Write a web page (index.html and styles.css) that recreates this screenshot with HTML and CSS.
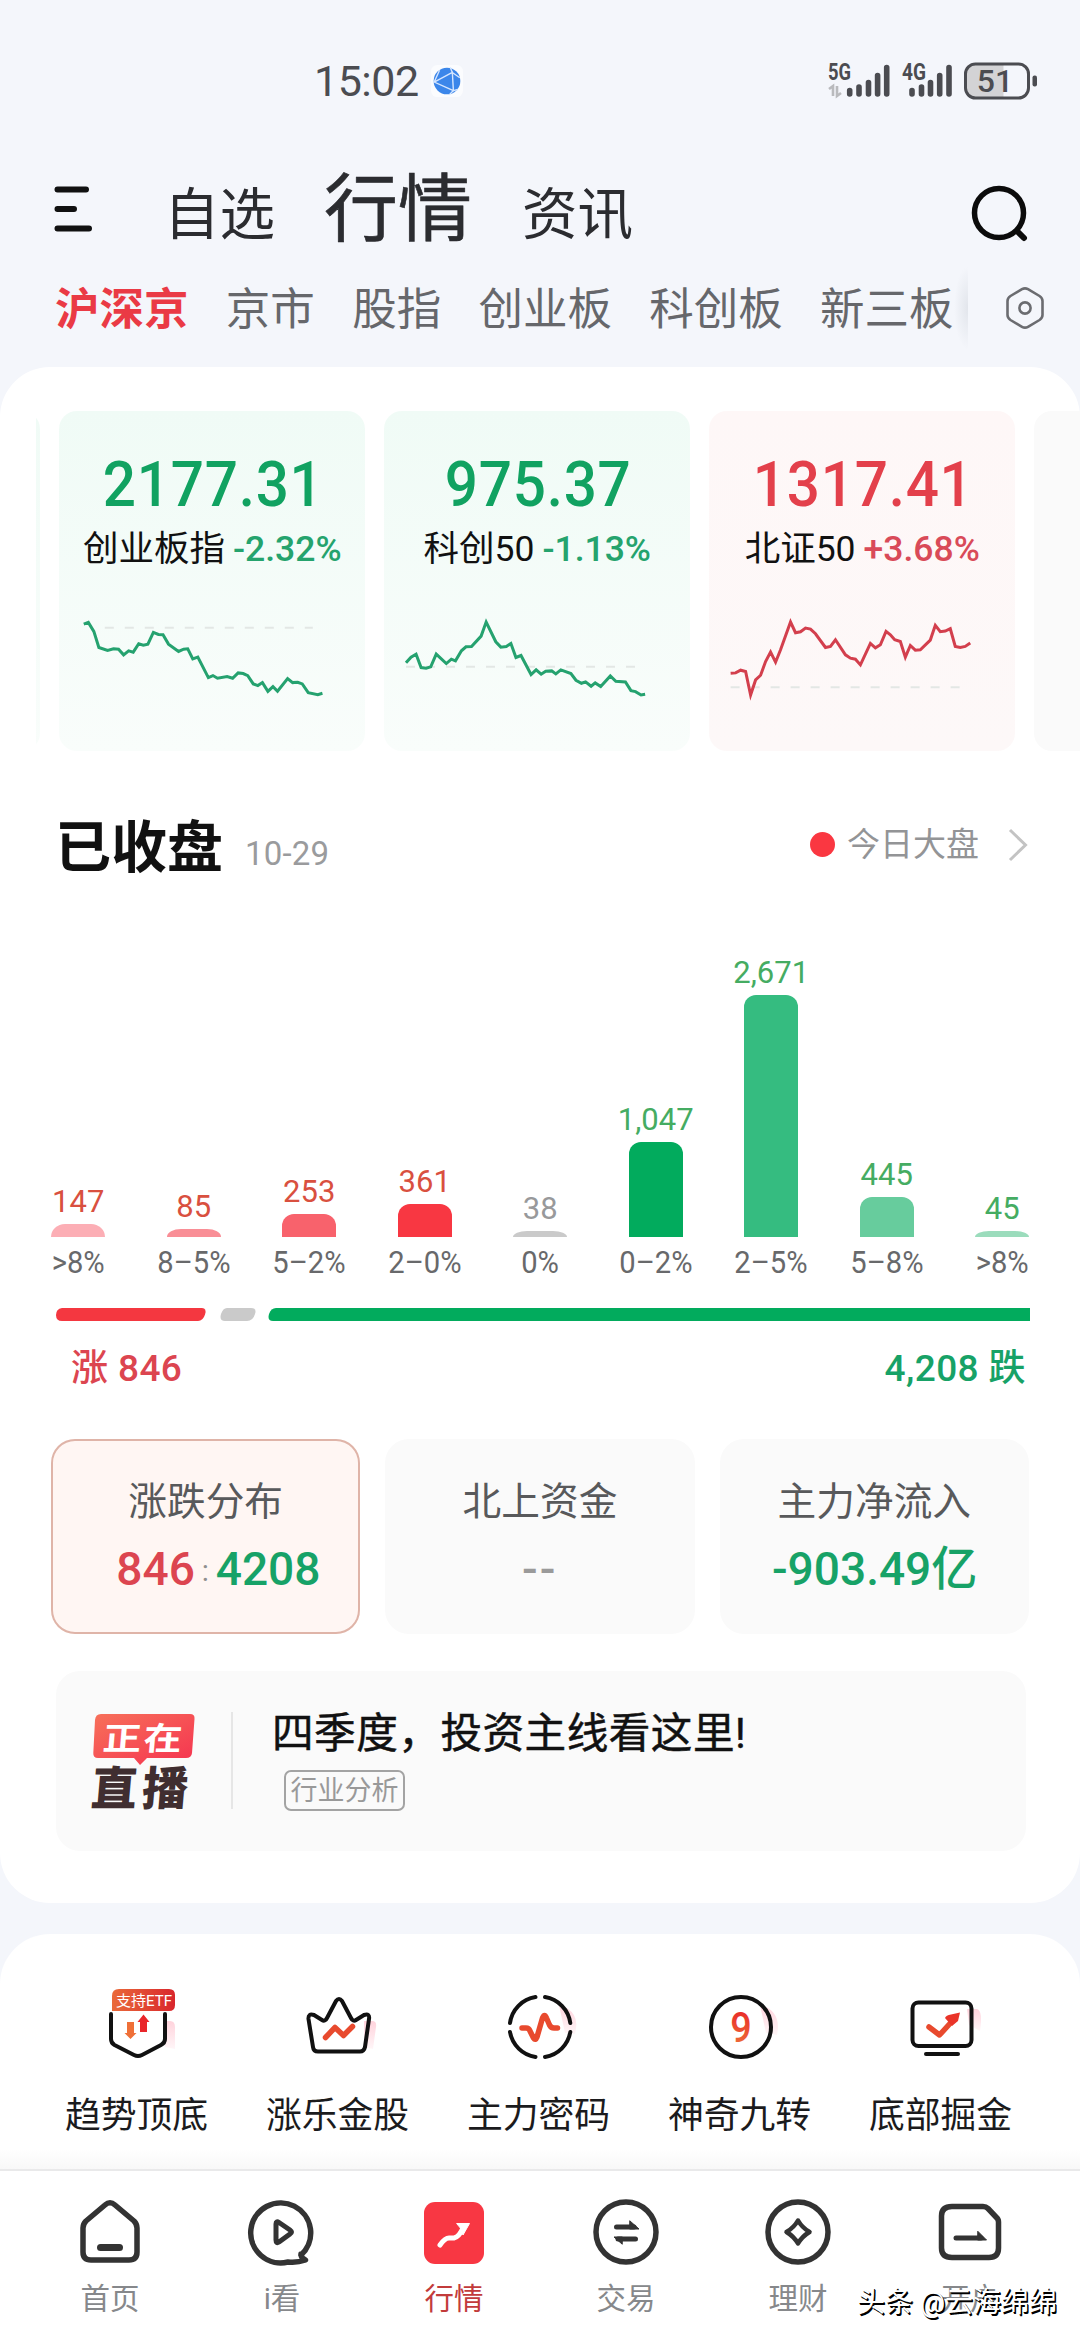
FILE: index.html
```html
<!DOCTYPE html>
<html lang="zh-CN">
<head>
<meta charset="utf-8">
<title>行情</title>
<link rel="stylesheet" href="styles.css">
</head>
<body>
<div class="app">
  <header class="status">
    <div class="clock">15:02</div>
    <svg class="globe" viewBox="-15 -15 30 30"><rect x="-15" y="-15" width="30" height="30" rx="6" fill="#fbfcfe"/><circle r="12.5" fill="#3b86ea"/><path d="M-12 1 L5 -8 L6 9 Z M5 -8 L3 -13 M5 -8 L12 -3 M6 9 L10 8 M6 9 L2 13 M-12 1 L-7 -10" fill="none" stroke="#d5e6ff" stroke-width="1.3"/></svg>
    <div class="signals">
      <svg class="signal" viewBox="0 0 64 36"><text x="0" y="17" class="gen" textLength="23" lengthAdjust="spacingAndGlyphs">5G</text><g stroke="#4b4c51" stroke-width="5.6" stroke-linecap="round"><path d="M21.7 27.5V31M31 24V31M40.5 19.5V31M49.600 12.500V31M58.700 4.500V31"/></g><path d="M1 26l4-3v10M9 23v10l4-3" fill="none" stroke="#b9babd" stroke-width="2.6"/></svg>
      <svg class="signal second" viewBox="0 0 54 36"><text x="0" y="17" class="gen" textLength="24" lengthAdjust="spacingAndGlyphs">4G</text><g stroke="#4b4c51" stroke-width="5.600" stroke-linecap="round"><path d="M10 27.500V31M19.500 24V31M28.500 19.500V31M37.700 12.500V31M47 4.500V31"/></g></svg>
      <svg class="battery" viewBox="0 0 74 38"><rect x="2" y="2" width="37.500" height="34" rx="9" fill="#d3d3d5"/><rect x="30" y="2" width="9.500" height="34" fill="#d3d3d5"/><rect x="1.500" y="2" width="63" height="34" rx="10" fill="none" stroke="#4b4c51" stroke-width="3"/><rect x="68.500" y="13.500" width="4.500" height="11" rx="2" fill="#4b4c51"/><text x="31" y="30" class="level">51</text></svg>
    </div>
  </header>

  <nav class="top">
    <svg class="menu" viewBox="0 0 40 46"><path d="M3.500 3.500H32M3.500 23H20M3.500 42.500H35" stroke="#111" stroke-width="6" stroke-linecap="round"/></svg>
    <span class="top-item">自选</span>
    <span class="top-item current">行情</span>
    <span class="top-item">资讯</span>
    <svg class="search" viewBox="0 0 60 60"><circle cx="29" cy="29" r="24.500" fill="none" stroke="#0b0b0b" stroke-width="5.500"/><path d="M47 47L54 54" stroke="#0b0b0b" stroke-width="6" stroke-linecap="round"/></svg>
  </nav>

  <nav class="tabs">
    <span class="tab active">沪深京</span><span class="tab">京市</span><span class="tab">股指</span><span class="tab">创业板</span><span class="tab">科创板</span><span class="tab">新三板</span>
    <i class="fade"></i>
    <svg class="hex" viewBox="0 0 40 44"><path d="M17 3.200Q20 1.500 23 3.200L34.500 10Q37.500 12 37.500 15V29Q37.500 32 34.500 34L23 40.800Q20 42.500 17 40.800L5.500 34Q2.500 32 2.500 29V15Q2.500 12 5.500 10Z" fill="none" stroke="#6b6c70" stroke-width="2.600"/><circle cx="20" cy="22" r="5.600" fill="none" stroke="#6b6c70" stroke-width="2.600"/></svg>
  </nav>

  <main class="panel market">
    <div class="cards">
      <div class="card down edge"></div>
      <div class="card down">
        <div class="price">2177.31</div>
        <div class="name">创业板指<b>-2.32%</b></div>
        <svg class="spark" viewBox="126 700 669 260" preserveAspectRatio="none"><path class="base" d="M226 744H680"/><polyline points="180,733 190,728 202,755 213,803 232,812 245,807 256,808 267,825 278,813 288,817 300,792 310,796 320,793 332,758 343,764 353,765 365,793 387,815 398,808 407,807 418,837 429,832 452,893 462,887 472,895 493,890 505,895 517,879 528,881 538,887 550,912 560,917 570,908 582,934 593,920 603,934 625,896 636,908 647,907 657,912 670,938 691,944 701,940"/></svg>
      </div>
      <div class="card down">
        <div class="price">975.37</div>
        <div class="name">科创50<b>-1.13%</b></div>
        <svg class="spark" viewBox="836 700 669 260" preserveAspectRatio="none"><path class="base" d="M884 861H1384"/><polyline points="884,849 895,832 906,823 917,863 928,865 938,861 950,823 972,851 983,838 992,843 1005,813 1015,801 1027,800 1048,769 1059,727 1080,786 1091,802 1103,800 1113,791 1124,833 1135,827 1157,884 1168,870 1179,883 1189,874 1202,873 1211,882 1222,870 1244,881 1255,901 1267,910 1276,906 1288,919 1297,909 1309,920 1330,888 1342,904 1363,906 1375,932 1385,935 1397,945 1406,943"/></svg>
      </div>
      <div class="card up">
        <div class="price">1317.41</div>
        <div class="name">北证50<b>+3.68%</b></div>
        <svg class="spark" viewBox="145 700 921 260" preserveAspectRatio="none"><path class="base" d="M210 922H900"/><polyline points="210,880 225,879 240,871 255,875 270,945 285,900 300,886 315,845 330,817 345,847 360,810 390,727 405,759 420,756 435,745 450,748 465,762 495,803 510,800 525,780 555,825 570,835 585,838 600,855 630,791 645,804 660,795 677,755 690,765 703,780 720,785 735,832 750,797 765,811 780,810 810,781 825,737 840,756 855,754 870,747 885,800 900,803 915,800 930,790"/></svg>
      </div>
      <div class="card more"></div>
    </div>

    <div class="heading">
      <h1>已收盘</h1><span class="date">10-29</span>
      <span class="today"><i class="dot"></i>今日大盘<svg class="chev" viewBox="0 0 20 34"><path d="M2 2L17.500 17L2 32" fill="none" stroke="#c3c3c3" stroke-width="3"/></svg></span>
    </div>

    <div class="chart">
      <div class="col r"><span>147</span><i class="bar b1 low" style="height:13px"></i><em>&gt;8%</em></div>
      <div class="col r"><span>85</span><i class="bar b2 low" style="height:8px"></i><em>8–5%</em></div>
      <div class="col r"><span>253</span><i class="bar b3" style="height:23px"></i><em>5–2%</em></div>
      <div class="col r"><span>361</span><i class="bar b4" style="height:33px"></i><em>2–0%</em></div>
      <div class="col n"><span>38</span><i class="bar b5 low" style="height:6px"></i><em>0%</em></div>
      <div class="col g"><span>1,047</span><i class="bar b6" style="height:95px"></i><em>0–2%</em></div>
      <div class="col g"><span>2,671</span><i class="bar b7" style="height:242px"></i><em>2–5%</em></div>
      <div class="col g"><span>445</span><i class="bar b8" style="height:40px"></i><em>5–8%</em></div>
      <div class="col g"><span>45</span><i class="bar b9 low" style="height:6px"></i><em>&gt;8%</em></div>
    </div>

    <svg class="ratio" viewBox="0 0 976 15"><path d="M8 1H148Q153 1 151 7.500Q149 14 144 14H8Q2 14 2 8Q2 2 8 1Z" fill="#f43740"/><path d="M173 1H197Q203 1 201 7Q199 14 193 14H171Q165 14 167 7Q169 1 173 1Z" fill="#cacaca"/><path d="M222 1H976V14H219Q213 14 215 7Q217 1 222 1Z" fill="#02ab5d"/></svg>
    <div class="totals"><span class="rise">涨 846</span><span class="fall">4,208 跌</span></div>

    <div class="tiles">
      <div class="tile on"><div class="label">涨跌分布</div><div class="value pair"><span class="rise">846</span><i>:</i><span class="fall">4208</span></div></div>
      <div class="tile"><div class="label">北上资金</div><div class="value none">--</div></div>
      <div class="tile"><div class="label">主力净流入</div><div class="value fall">-903.49亿</div></div>
    </div>

    <div class="live">
      <svg class="onair" viewBox="0 0 106 100"><defs><linearGradient id="lg" x1="0" y1="0" x2="1" y2="1"><stop offset="0" stop-color="#f7705a"/><stop offset="1" stop-color="#f53350"/></linearGradient></defs><path d="M9 2H98Q103 2 102.500 7L100 41Q99.500 46 94 46H55L48 53L42 46H6Q1 46 1.300 41L3 8Q3.500 2 9 2Z" fill="url(#lg)"/><text transform="translate(10 37.500) skewX(-5) scale(1.200 1)" class="now" textLength="66">正在</text><text transform="translate(-2 93) skewX(-5)" class="cast" textLength="97">直播</text></svg>
      <i class="rule"></i>
      <div class="live-text"><div class="live-title">四季度，投资主线看这里!</div><span class="tag">行业分析</span></div>
    </div>
  </main>

  <section class="panel quick">
    <svg width="0" height="0" class="defs"><defs><linearGradient id="hot" x1="0" y1="0" x2="0" y2="1"><stop offset="0" stop-color="#e81b25"/><stop offset="1" stop-color="#ee7a3c"/></linearGradient><linearGradient id="tagfill" x1="0" y1="0" x2="1" y2="0"><stop offset="0" stop-color="#ea6a3a"/><stop offset="1" stop-color="#d9262c"/></linearGradient><linearGradient id="pink" x1="0" y1="0" x2="0" y2="1"><stop offset="0" stop-color="#ffd3dc"/><stop offset="1" stop-color="#fff6f8"/></linearGradient></defs></svg>
    <a class="q"><svg viewBox="-45 -40 90 80"><path d="M26 -6H33Q38 -6 38 0V22L28 20Z" fill="url(#pink)"/><path d="M-26 -13V12Q-26 16 -22.500 18L-3 28Q1 30 5 28L24 18Q28 16 28 12V-13" class="ink"/><path d="M-10 -5H-3V6H-.500L-6.500 12L-12.500 6H-10Z" fill="#ef7038"/><path d="M3 5H10V-5H12.500L6.500 -12.500L.500 -5H3Z" fill="#e9252a"/><path d="M-18 -38H32Q38 -38 38 -32V-22Q38 -16 32 -16H-25V-31Q-25 -38 -18 -38Z" fill="url(#tagfill)"/><text x="-21" y="-21.500" class="etf" textLength="56" lengthAdjust="spacingAndGlyphs">支持ETF</text></svg>趋势顶底</a>
    <a class="q"><svg viewBox="-45 -40 90 80"><path d="M26 -6H34Q39 -6 38 0L35 22L26 20Z" fill="url(#pink)"/><path d="M-2 -26Q1 -30 4 -26L13 -9Q15 -5 18 -7L26 -12Q32 -14 31 -8L27 20Q26 24.500 22 24.500H-20Q-24.500 24.500 -25 20L-29.500 -8Q-30 -14 -24 -12L-16 -7Q-13 -5 -11 -9Z" class="ink"/><path d="M-12.500 10.500L-3 .500L5.500 8.500L14.500 -.500" class="hot"/></svg>涨乐金股</a>
    <a class="q"><svg viewBox="-45 -40 90 80"><path d="M20 -22Q42 -16 36 7L26 6Z" fill="url(#pink)"/><path d="M-3.500 -30A30.500 30.500 0 0 0 -29 -4M6 -30A30.500 30.500 0 0 1 31.300 -4M31.300 5A30.500 30.500 0 0 1 6 30M-3.500 30A30.500 30.500 0 0 1 -29 5" class="ink"/><path d="M-17 1H-13Q-10 1 -9 4L-5.500 11Q-3.500 14 -2 10L3.500 -9Q5.500 -14 7.500 -9L10.500 -2Q12 1 15 1H18.500" class="hot"/></svg>主力密码</a>
    <a class="q"><svg viewBox="-45 -40 90 80"><path d="M20 -22Q42 -16 37 8L26 6Z" fill="url(#pink)"/><circle cx="1" r="30" class="ink"/><text transform="translate(1 15) scale(.88 1)" class="nine">9</text></svg>神奇九转</a>
    <a class="q"><svg viewBox="-45 -40 90 80"><path d="M26 -18H36Q42 -16 39 4L28 -2Z" fill="url(#pink)"/><rect x="-28.500" y="-24.500" width="59" height="43.500" rx="6" class="ink"/><path d="M-15 27H17" class="ink"/><path d="M-12 0L-1.500 8L14 -9" class="hot"/><path d="M4 -9Q5 -12 10 -12.500L19 -14.500L17 -6L11 -1Z" fill="#ea3429"/></svg>底部掘金</a>
  </section>

  <footer class="bottom">
    <a><svg viewBox="-36 -36 72 72"><path d="M-5 -27Q0 -31.500 5 -27L24 -11Q27 -8 27 -4V20Q27 28 19 28H-19Q-27 28 -27 20V-4Q-27 -8 -24 -11Z"/><path d="M-9.500 15.500H9.500" stroke-width="7"/></svg>首页</a>
    <a><svg viewBox="-36 -36 72 72"><path d="M19 23A30 30 0 1 0 6 30Q15 31 23.500 28Q19 26 19 22" stroke-width="5.500"/><path d="M-6 -8Q-6 -11.500 -3 -9.500L8 -2Q11 0 8 2L-3 10Q-6 12 -6 8Z" stroke-width="5"/></svg>i看</a>
    <a class="active"><svg viewBox="-36 -36 72 72"><rect x="-30" y="-30" width="60" height="62" rx="11" class="fill"/><path d="M-14 13Q-9 6 -5 6H0Q5 5 9 -4" class="trend"/><path d="M3 -8.500H15.500L9 3L7 -3Z" class="white"/></svg>行情</a>
    <a><svg viewBox="-36 -36 72 72"><circle r="30"/><path d="M-9.500 -5H8M9.500 7H-8" stroke-width="5"/><path d="M4 -11L13 -3H4ZM-4 12L-12 5H-4Z" class="solid"/></svg>交易</a>
    <a><svg viewBox="-36 -36 72 72"><circle r="30"/><path d="M0 -11.500Q4 -4.500 11.500 0Q4 4.500 0 11.500Q-4 4.500 -11.500 0Q-4 -4.500 0 -11.500Z" stroke-width="4.500"/></svg>理财</a>
    <a><svg viewBox="-36 -36 72 72"><path d="M-18 -25.500H13Q16 -25.500 18 -23.500L26 -15Q28.500 -13 28.500 -10V16Q28.500 25.500 19 25.500H-18Q-28.500 25.500 -28.500 16V-16Q-28.500 -25.500 -18 -25.500Z" stroke-width="5.500"/><path d="M-14 6H11" stroke-width="5"/><path d="M8 -.500L16.500 8H8Z" class="solid"/></svg>开户</a>
    <div class="mark">头条 @云海绵绵</div>
  </footer>
</div>
</body>
</html>
```

FILE: styles.css
```css
* { box-sizing: border-box; }
body { margin: 0; background: #f4f6fb; font-family: Roboto, "Noto Sans CJK SC", sans-serif; color: #111; }
i, em { font-style: normal; }
svg { display: block; flex: none; overflow: visible; }
.app { width: 1080px; height: 2340px; overflow: hidden; display: flex; flex-direction: column; background: #f4f6fb; }

.status { height: 162px; display: flex; align-items: center; padding: 0 42px 0 314px; flex: none; color: #4b4c51; }
.clock { font-size: 43px; line-height: 60px; width: 117px; letter-spacing: -.5px; }
.globe { width: 32px; height: 32px; }
.signals { margin-left: auto; display: flex; align-items: center; }
.signal { width: 64px; height: 36px; }
.signal.second { width: 54px; margin-left: 10px; }
.battery { width: 74px; height: 38px; margin-left: 8px; }
.gen { font-size: 23px; font-weight: 700; fill: #4b4c51; }
.level { font-size: 32px; font-weight: 500; fill: #4b4c51; text-anchor: middle; }

.top { height: 104px; flex: none; display: flex; align-items: center; padding: 0 50px 0 54px; color: #2b2c30; }
.menu { width: 40px; height: 46px; margin-bottom: 11px; margin-right: 70px; }
.top-item { font-size: 55.500px; line-height: 80px; margin-right: 49px; margin-top: 3px; }
.top-item.current { font-size: 74px; margin-top: -9px; margin-right: 50px; -webkit-text-stroke: .6px #2b2c30; }
.search { width: 60px; height: 60px; margin-left: auto; }

.tabs { height: 84px; flex: none; display: flex; align-items: center; padding: 0 35px 0 55px; gap: 37.3px; font-size: 44.5px; color: #66676b; margin-bottom: 17px; }
.tab { line-height: 60px; margin-top: 4px; white-space: nowrap; }
.tab.active { color: #ea3a45; font-weight: 700; }
.fade { width: 24px; height: 84px; margin-left: -37px; background: radial-gradient(ellipse at 100% 50%, rgba(214,218,225,.6), rgba(220,223,229,0) 70%); }
.hex { width: 40px; height: 44px; margin-left: auto; }

.panel { background: #fff; border-radius: 50px; flex: none; }
.market { height: 1536px; padding-top: 44px; }
.cards { display: flex; gap: 18.500px; height: 340px; margin-left: 36px; overflow: hidden; }
.card { flex: none; width: 306.500px; border-radius: 18px; text-align: center; overflow: hidden; }
.card.down { background: linear-gradient(#f0fbf6, #f9fdfb); color: #11a261; }
.card.up { background: linear-gradient(#fef7f7, #fdf8f8); color: #e3404b; }
.card.edge { margin-left: -302.500px; }
.card.more { background: #fafafa; }
.price { font-size: 62.500px; font-weight: 500; line-height: 72px; margin-top: 38px; padding-left: 2px; letter-spacing: .8px; transform: scaleX(.935); }
.name { font-size: 35.500px; line-height: 48px; margin-top: 4px; padding-left: 1px; color: #111; display: flex; justify-content: center; gap: 8px; white-space: nowrap; }
.name b { font-weight: 500; color: #25a36d; }
.card.up .name b { color: #d94a58; }
.spark { width: 306.500px; height: 87px; margin-top: 40px; }
.spark polyline { fill: none; stroke: #25a26f; stroke-width: 3; vector-effect: non-scaling-stroke; }
.card.up .spark polyline { stroke: #d33f4d; }
.base { stroke: #e3e7e5; stroke-width: 2; stroke-dasharray: 9 11; vector-effect: non-scaling-stroke; fill: none; }

.heading { display: flex; align-items: center; height: 80px; margin-top: 57px; padding: 0 52px 0 55px; }
h1 { margin: 0; font-size: 56px; font-weight: 700; line-height: 80px; }
.date { font-size: 33px; letter-spacing: .2px; color: #9a9b9d; margin: 11px 0 0 22px; }
.today { margin: -7px 0 0 auto; display: flex; align-items: center; font-size: 33px; color: #939496; line-height: 40px; }
.dot { width: 25px; height: 25px; border-radius: 50%; background: #fa3741; margin-right: 12px; }
.chev { width: 20px; height: 34px; margin-left: 29px; }

.chart { display: grid; grid-template-columns: repeat(9, 115.500px); height: 395px; padding-left: 20.500px; }
.col { display: flex; flex-direction: column; justify-content: flex-end; align-items: center; font-size: 31px; }
.col span { line-height: 36px; margin-bottom: 4px; }
.bar { width: 54px; border-radius: 12px 12px 0 0; }
.bar.low { border-radius: 14px 14px 0 0 / 100% 100% 0 0; }
.col em { line-height: 36px; margin: 8px 0 2px; color: #68696b; transform: scaleX(.94); }
.r { color: #d9503f; } .n { color: #98999b; } .g { color: #45ac62; }
.b1 { background: #fcaeb5; } .b2 { background: #f98e96; } .b3 { background: #f8626c; } .b4 { background: #f83742; }
.b5 { background: #cacaca; } .b6 { background: #02ab5d; } .b7 { background: #35bc80; } .b8 { background: #67cc9d; } .b9 { background: #9bdcbc; }

.ratio { width: 976px; height: 15px; margin: 24px 0 0 54px; }
.totals { display: flex; justify-content: space-between; margin: 22px 54px 0 71px; font-size: 37px; font-weight: 500; line-height: 50px; letter-spacing: .4px; }
.rise { color: #dc4550; } .fall { color: #17a267; }

.tiles { display: flex; gap: 25px; padding: 0 51px; margin-top: 45px; height: 195px; }
.tile { flex: 1; background: #fafafa; border-radius: 24px; text-align: center; }
.tile.on { background: #fff6f3; box-shadow: inset 0 0 0 2px #dfb4a8; }
.label { font-size: 38.700px; line-height: 50px; margin-top: 38px; color: #58595b; }
.value { font-size: 47px; font-weight: 500; line-height: 56px; margin-top: 14px; transform: scaleX(.98); white-space: nowrap; }
.pair { padding-left: 26px; }
.pair i { font-size: 30px; color: #8f8f8f; margin: 0 7px; position: relative; top: -4px; font-weight: 400; }
.none { color: #9a9a9a; letter-spacing: 2px; }

.live { margin: 37px 54px 0 56px; height: 180px; border-radius: 24px; background: #fafafa; display: flex; padding: 41px 0 0 36px; }
.onair { width: 106px; height: 100px; }
.now { font-size: 32px; font-weight: 700; fill: #fff; }
.cast { font-size: 46px; font-weight: 900; fill: #402e30; }
.rule { width: 2px; height: 97px; background: #e6e6e6; margin-left: 33px; }
.live-text { margin-left: 39px; }
.live-title { font-size: 41.600px; font-weight: 400; line-height: 46px; margin-top: -1px; letter-spacing: .5px; -webkit-text-stroke: .5px #111; }
.tag { display: block; width: 121px; height: 41px; margin: 13px 0 0 12px; border: 2px solid #a3a3a3; border-radius: 7px; font-size: 27px; line-height: 39px; color: #999; text-align: center; }

.quick { height: 237px; margin-top: 31px; border-radius: 50px 50px 0 0; padding: 53px 39px 0 36px; display: grid; grid-template-columns: repeat(5, 201px); background: linear-gradient(#fff 215px, #f8f8f8); border-bottom: 2px solid #e9e9ea; }
.defs { position: absolute; }
.q { display: flex; flex-direction: column; align-items: center; font-size: 35.800px; line-height: 44px; color: #1b1b1d; }
.q svg { width: 90px; height: 80px; margin-bottom: 27px; }
.ink { fill: none; stroke: #111; stroke-width: 4; stroke-linecap: round; stroke-linejoin: round; }
.hot { fill: none; stroke: #e84a2e; stroke-width: 5.500; stroke-linecap: round; stroke-linejoin: round; }
.etf { font-size: 15px; fill: #fff; }
.nine { font-size: 43px; font-weight: 500; fill: url(#hot); text-anchor: middle; }

.bottom { flex: none; height: 169px; background: #fff; display: grid; grid-template-columns: repeat(6, 172px); padding: 25px 24px 0; position: relative; }
.bottom a { display: flex; flex-direction: column; align-items: center; font-size: 29.500px; line-height: 36px; color: #86888b; }
.bottom svg { width: 72px; height: 72px; margin-bottom: 13px; fill: none; stroke: #333; stroke-width: 5.500; stroke-linecap: round; stroke-linejoin: round; }
.bottom .active { color: #c23b3b; }
.bottom .fill { fill: #f83743; stroke: none; }
.bottom .solid { fill: #333; stroke-width: 1; }
.bottom .white { fill: #fff; stroke: #fff; stroke-width: 1; }
.bottom .trend { stroke: #fff; stroke-width: 5; }
.mark { position: absolute; left: 857px; top: 113px; font-size: 28px; line-height: 38px; color: #fff; text-shadow: 1.500px 1.500px 0 #000, 1px 1px 0 #000; white-space: nowrap; }
```
